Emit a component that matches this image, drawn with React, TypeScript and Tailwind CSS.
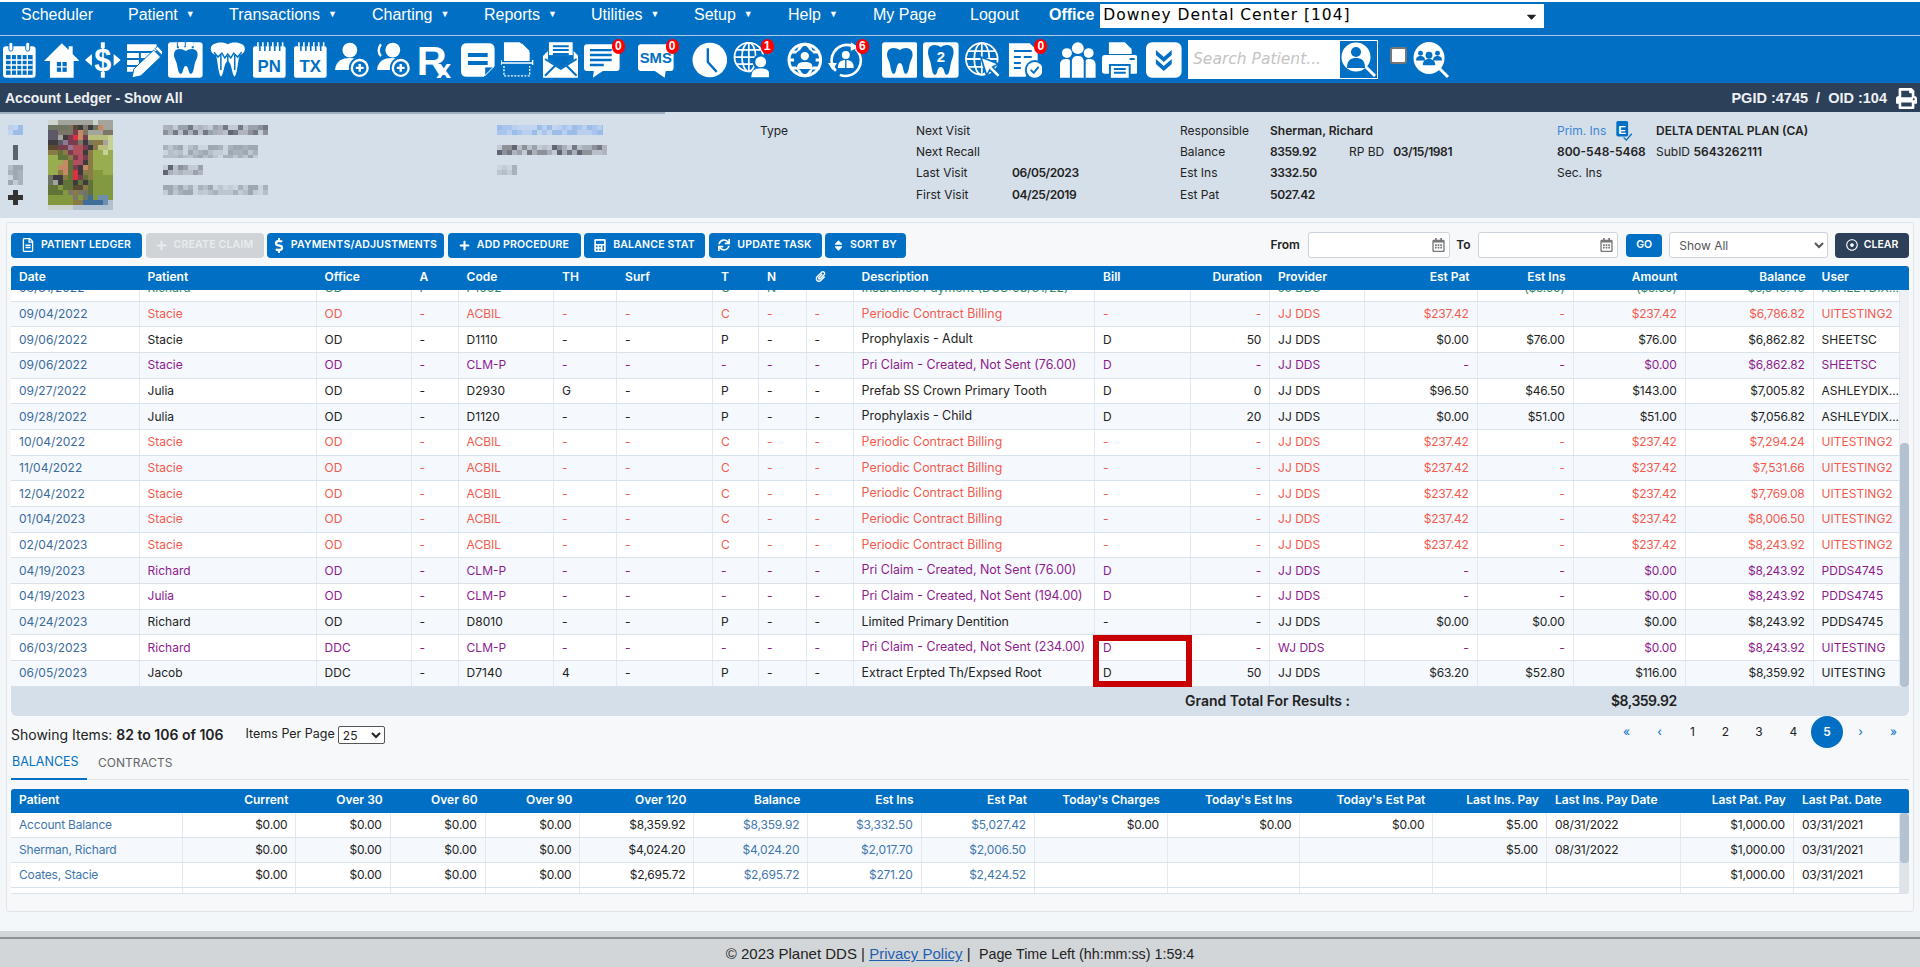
import type { ReactNode } from 'react';
import { FaCalculator, FaCaretDown, FaDollarSign, FaPaperclip, FaPlus, FaPrint, FaRegCalendarAlt, FaRegDotCircle, FaRegFileAlt, FaSort, FaSync } from 'react-icons/fa';

const B = '#0170c4';
const TOOTH = 'M18 9C14 6 8 6 6.5 10 5 15 8 18 9 22 10 27 10.5 32 13 32 15.5 32 15 24 18 24 21 24 20.5 32 23 32 25.5 32 26 27 27 22 28 18 31 15 29.5 10 28 6 22 6 18 9Z';

function Svg({ children }: { children: ReactNode }) {
  return <svg viewBox="0 0 36 36" className="h-[36px] w-full" fill="#fff">{children}</svg>;
}

function Person({ x, y, s = 1, fill = '#fff' }: { x: number; y: number; s?: number; fill?: string }) {
  return (
    <g transform={`translate(${x} ${y}) scale(${s})`} fill={fill}>
      <circle cx="0" cy="-6" r="5.5" />
      <path d="M-10 10C-10 2-5 0 0 0 5 0 10 2 10 10Z" />
    </g>
  );
}

function PlusDisc({ x, y }: { x: number; y: number }) {
  return (
    <g>
      <circle cx={x} cy={y} r="11" fill={B} />
      <circle cx={x} cy={y} r="8" fill="none" stroke="#fff" strokeWidth="2.4" />
      <path d={`M${x - 4} ${y}h8M${x} ${y - 4}v8`} stroke="#fff" strokeWidth="2.4" />
    </g>
  );
}

function Globe({ x = 18, y = 18, r = 16 }: { x?: number; y?: number; r?: number }) {
  return (
    <g fill="none" stroke="#fff" strokeWidth="1.8">
      <circle cx={x} cy={y} r={r} />
      <ellipse cx={x} cy={y} rx={r * 0.48} ry={r} />
      <path d={`M${x} ${y - r}v${r * 2}M${x - r} ${y}h${r * 2}M${x - r * 0.87} ${y - r * 0.5}h${r * 1.74}M${x - r * 0.87} ${y + r * 0.5}h${r * 1.74}`} />
    </g>
  );
}

function Label({ x, y, size, children, fill = B }: { x: number; y: number; size: number; children: ReactNode; fill?: string }) {
  return <text x={x} y={y} fontSize={size} fontWeight="700" fontFamily="'Liberation Sans', sans-serif" textAnchor="middle" fill={fill}>{children}</text>;
}

function PadIcon({ text }: { text: string }) {
  return (
    <Svg>
      <rect x="1" y="4" width="33" height="32" rx="2" />
      <path d="M8 1v8M13 1v8M18 1v8M23 1v8M28 1v8" stroke={B} strokeWidth="1.6" />
      <path d="M6 0v4M11 0v4M16 0v4M21 0v4M26 0v4M31 0v4" stroke="#fff" strokeWidth="1.6" />
      <Label x={17.5} y={30} size={17}>{text}</Label>
    </Svg>
  );
}

const Icons = {
  calendar: (
    <Svg>
      <rect x="1" y="4" width="33" height="32" rx="3" />
      <rect x="4" y="13" width="27" height="20" fill={B} />
      <path d="M9.4 13v20M14.8 13v20M20.2 13v20M25.6 13v20M4 18h27M4 23h27M4 28h27" stroke="#fff" strokeWidth="1.4" />
      <rect x="7" y="0" width="4" height="9" rx="2" stroke={B} />
      <rect x="24" y="0" width="4" height="9" rx="2" stroke={B} />
    </Svg>
  ),
  home: (
    <Svg>
      <path d="M18 1 25 8V4H29V12L36 19H30V36H6V19H0Z" />
      <path d="M13 20H23V30H13Z" fill={B} />
      <path d="M18 20V30M13 25H23" stroke="#fff" strokeWidth="1.4" />
    </Svg>
  ),
  dollar: (
    <Svg>
      <Label x={18} y={29} size={31} fill="#fff">$</Label>
      <path d="M0 18 7 12V24ZM36 18 29 12V24Z" />
      <path d="M16 0h4v6h-4ZM16 30h4v6h-4Z" />
    </Svg>
  ),
  editList: (
    <Svg>
      <path d="M0 2H30V9H0ZM0 11H12V16H0ZM14 11H25V16H14ZM0 18H12V23H0ZM0 25H10V30H0ZM27 11H30V13L27 16Z" />
      <path d="M5 36 7 27 27 8 34 15 14 34ZM28.5 6.5 31 4 37 10.5 35 13Z" stroke={B} strokeWidth="1" />
    </Svg>
  ),
  toothBox: (
    <Svg>
      <rect x="0" y="0" width="35" height="36" rx="3" />
      <path d={TOOTH} fill={B} />
      <path d="M10 0v6M25 0v6M17 0v5" stroke={B} strokeWidth="2" />
      <path d="M10 0H17V4H10ZM19 0H26V4H19Z" fill="#fff" />
    </Svg>
  ),
  toothRoots: (
    <Svg>
      <path d="M18 2C13-1 3 0 1 5 0 10 3 12 6 13 8 20 8 30 11 35 14 33 14 20 18 19 22 20 22 33 25 35 28 30 28 20 30 13 33 12 36 10 35 5 33 0 23-1 18 2Z" />
      <path d="M4 10 8 15 12 11 15 16 18 12 21 16 24 11 28 15 32 10M11 13V28M25 13V28M18 14V20" fill="none" stroke={B} strokeWidth="1.5" />
    </Svg>
  ),
  pn: <PadIcon text="PN" />,
  tx: <PadIcon text="TX" />,
  addUser: (
    <Svg>
      <circle cx="15" cy="8" r="7.5" />
      <path d="M0 28C1 19 7 16 15 16 23 16 28 19 30 28Z" />
      <PlusDisc x={25} y={26} />
    </Svg>
  ),
  addUserAlt: (
    <Svg>
      <circle cx="17" cy="8" r="7.5" />
      <path d="M5 2C2 6 2 11 5 14" fill="none" stroke="#fff" strokeWidth="2.4" />
      <path d="M1 28C2 19 8 16 16 16 24 16 28 19 30 28Z" />
      <PlusDisc x={25} y={26} />
    </Svg>
  ),
  rx: (
    <Svg>
      <Label x={14} y={33} size={42} fill="#fff">R</Label>
      <Label x={26} y={36} size={27} fill="#fff">x</Label>
    </Svg>
  ),
  note: (
    <Svg>
      <path d="M7 1H29Q35 1 35 7V24L24 35H7Q1 35 1 29V7Q1 1 7 1Z" />
      <path d="M8 11H28V15H8ZM8 19H28V23H8Z" fill={B} />
      <path d="M34 25 25 34V25Z" fill={B} stroke="#fff" strokeWidth="1" />
    </Svg>
  ),
  scan: (
    <Svg>
      <path d="M3 0H19L29 10V19H3ZM21 1 29 9H21Z" />
      <path d="M0 21H32M0 18v5M32 18v5" stroke="#fff" strokeWidth="1.4" />
      <path d="M3 24V34H29V24" fill="none" stroke="#fff" strokeWidth="1.4" strokeDasharray="2 1.4" />
    </Svg>
  ),
  mail: (
    <Svg>
      <path d="M6 0H30V13H6Z" />
      <path d="M10 4H26M10 8H26M10 12H26" stroke={B} strokeWidth="2" />
      <path d="M0 14 5 9V18L18 26 31 18V9L36 14V36H0Z" />
      <path d="M2 17 18 27 34 17M2 34 13 23M34 34 23 23" fill="none" stroke={B} strokeWidth="2" />
    </Svg>
  ),
  chat: (
    <Svg>
      <path d="M3 2H33Q36 2 36 5V26Q36 29 33 29H19L9 36 10 29H3Q0 29 0 26V5Q0 2 3 2Z" />
      <path d="M6 8H28M6 13H28M6 18H28M6 23H20" stroke={B} strokeWidth="2.4" />
    </Svg>
  ),
  sms: (
    <Svg>
      <path d="M3 2H33Q36 2 36 5V26Q36 29 33 29H28L27 36 17 29H3Q0 29 0 26V5Q0 2 3 2Z" />
      <Label x={18} y={21} size={15}>SMS</Label>
    </Svg>
  ),
  clock: (
    <Svg>
      <circle cx="18" cy="18" r="17.5" />
      <path d="M16 6V20L25 30" fill="none" stroke={B} strokeWidth="2.4" />
    </Svg>
  ),
  globeUser: (
    <Svg>
      <Globe x={16} y={15} r={14.5} />
      <circle cx="28" cy="20" r="8" fill={B} />
      <circle cx="28" cy="20" r="5.5" />
      <path d="M18 36C18 28 22 26 28 26 34 26 38 28 38 36Z" stroke={B} />
    </Svg>
  ),
  globe: (
    <Svg>
      <g stroke="#fff" fill="none" strokeWidth="3"><circle cx="18" cy="18" r="16" /><ellipse cx="18" cy="18" rx="8" ry="16" /><path d="M3 10H33M3 26H33M2 18H8M28 18H34" /></g>
      <circle cx="18" cy="18" r="11" fill={B} />
      <circle cx="18" cy="14" r="4.2" />
      <path d="M10 27C10 21 13 20 18 20 23 20 26 21 26 27Z" />
    </Svg>
  ),
  sync: (
    <Svg>
      <path d="M8 29A15.5 15.5 0 0 1 24 3.5M28 7A15.5 15.5 0 0 1 12 33" fill="none" stroke="#fff" strokeWidth="2.6" />
      <path d="M0 21H9L4.5 28ZM23 0 31 5 23 9Z" />
      <circle cx="18" cy="13" r="4" />
      <path d="M10 26C10 20 13 18 18 18 23 18 26 20 26 26Z" />
      <path d="M18 18v8" stroke={B} strokeWidth="1.4" />
    </Svg>
  ),
  toothPlain: (
    <Svg>
      <rect x="0" y="0" width="36" height="36" rx="3" />
      <path d="M18 8C14 5 7 5 5.5 10 4 15 7 18 8 22 9 27 9.5 32 12 32 15 32 14 21 18 21 22 21 21 32 24 32 26.5 32 27 27 28 22 29 18 32 15 30.5 10 29 5 22 5 18 8Z" fill={B} />
    </Svg>
  ),
  toothTwo: (
    <Svg>
      <rect x="0" y="0" width="36" height="36" rx="3" />
      <path d="M18 5C14 2 7 2 5.5 7 4 13 7 17 8 22 9 27 9.5 33 12 33 15 33 14 25 18 25 22 25 21 33 24 33 26.5 33 27 27 28 22 29 17 32 13 30.5 7 29 2 22 2 18 5Z" fill={B} />
      <Label x={18} y={20} size={15} fill="#fff">2</Label>
    </Svg>
  ),
  globeCursor: (
    <Svg>
      <Globe x={17} y={17} r={16} />
      <path d="M16 15 34 22 28 25 36 33 33 36 25 28 22 34Z" stroke={B} strokeWidth="1.6" />
    </Svg>
  ),
  docCheck: (
    <Svg>
      <path d="M2 1H23L31 9V21H24L19 35H2Z" />
      <path d="M7 9H25M7 15H14M17 15H25M7 21H14M7 26H14" stroke={B} strokeWidth="2" />
      <circle cx="28" cy="28" r="10" fill={B} />
      <circle cx="28" cy="28" r="8" />
      <path d="M24 28 27 31 32 25" fill="none" stroke={B} strokeWidth="2" />
    </Svg>
  ),
  people: (
    <Svg>
      <circle cx="7" cy="11" r="5" />
      <circle cx="29" cy="11" r="5" />
      <circle cx="18" cy="6" r="6" />
      <path d="M0 36V23C0 18 3 17 7 17 9 17 10 18 10 19V36ZM26 36V19C26 18 27 17 29 17 33 17 36 18 36 23V36ZM12 36V20C12 15 15 14 18 14 21 14 24 15 24 20V36Z" />
    </Svg>
  ),
  printer: (
    <Svg>
      <path d="M7 0H23L30 7V12H7ZM24 1 29 6H24Z" />
      <path d="M3 13H33Q36 13 36 16V30Q36 32 33 32H29V22H7V32H3Q0 32 0 30V16Q0 13 3 13Z" />
      <path d="M9 24H27V36H9Z" />
      <path d="M12 27H24M12 31H24" stroke={B} strokeWidth="2" />
      <path d="M28 17H33" stroke={B} strokeWidth="2" />
    </Svg>
  ),
  chevrons: (
    <Svg>
      <rect x="0" y="0" width="36" height="36" rx="6" />
      <path d="M10 8 18 15 26 8V13L18 20 10 13ZM10 17 18 24 26 17V22L18 29 10 22Z" fill={B} />
    </Svg>
  ),
};

const toolbar: { icon: keyof typeof Icons; badge?: string; gap?: string }[] = [
  { icon: 'calendar' }, { icon: 'home' }, { icon: 'dollar' }, { icon: 'editList' }, { icon: 'toothBox' }, { icon: 'toothRoots' },
  { icon: 'pn' }, { icon: 'tx' }, { icon: 'addUser' }, { icon: 'addUserAlt' }, { icon: 'rx' }, { icon: 'note' }, { icon: 'scan' }, { icon: 'mail' },
  { icon: 'chat', badge: '0' }, { icon: 'sms', badge: '0', gap: 'ml-[12px]' }, { icon: 'clock', gap: 'ml-[12px]' }, { icon: 'globeUser', badge: '1' },
  { icon: 'globe', gap: 'ml-[12px]' }, { icon: 'sync', badge: '6' }, { icon: 'toothPlain', gap: 'ml-[12px]' }, { icon: 'toothTwo' }, { icon: 'globeCursor' },
  { icon: 'docCheck', badge: '0' }, { icon: 'people', gap: 'ml-[12px]' }, { icon: 'printer' }, { icon: 'chevrons', gap: 'ml-[3px]' },
];

const navItems = [
  { label: 'Scheduler', w: 'w-[107px]' }, { label: 'Patient', w: 'w-[101px]', caret: true }, { label: 'Transactions', w: 'w-[143px]', caret: true },
  { label: 'Charting', w: 'w-[112px]', caret: true }, { label: 'Reports', w: 'w-[107px]', caret: true }, { label: 'Utilities', w: 'w-[103px]', caret: true },
  { label: 'Setup', w: 'w-[94px]', caret: true }, { label: 'Help', w: 'w-[85px]', caret: true }, { label: 'My Page', w: 'w-[97px]' }, { label: 'Logout', w: 'w-[79px]' },
];

function hash(n: number) {
  const v = Math.sin(n * 127.1) * 43758.5453;
  return v - Math.floor(v);
}

// blurred-out patient details
function Pixels({ w, h, seed, colors }: { w: number; h: number; seed: number; colors: string[] }) {
  const cols = Math.ceil(w / 5);
  const rows = Math.ceil(h / 5);
  const cells = [];
  for (let y = 0; y < rows; y++) {
    for (let x = 0; x < cols; x++) {
      const i = x + y * cols + seed;
      cells.push(<rect key={i} x={x * 5} y={y * 5} width="5" height="5" fill={colors[Math.floor(hash(i) * colors.length)]} />);
    }
  }
  return <svg width={w} height={h} className="block">{cells}</svg>;
}

const GREY = ['#8e9298', '#a9b0b9', '#b9c0c9', '#737a85', '#c3cbd5', '#99a2ad', '#b0b5bd', '#5f6774'];
const PALE = ['#b6bec8', '#c3ccd6', '#a8b2bd', '#ccd4dd', '#9fa8b2', '#bcc6d1'];
const BLUE = ['#a9c5ee', '#b8cfef', '#9dbde9', '#c2d5ef'];

const PHOTO_KEY: Record<string, string> = {
  l: '#cdd3cf', n: '#a3a49c', w: '#6e7563', k: '#3d3a40', s: '#5c5a68', b: '#7d7566', r: '#b0505c', R: '#de2f3e', m: '#7a3c50', t: '#c58a64',
  y: '#b8c07c', Y: '#c8d098', g: '#82993f', G: '#98ac50', d: '#62733a', o: '#8a7a45', u: '#3f6d99', U: '#6f8fae', x: '#5a4a30', p: '#8f7a92', c: '#b3c0cf',
};
const PHOTO = [
  'llnnnnnnnlnnn', 'wwwwbxkbkwtnn', 'ssbbbmtbnnnbb', 'ssnkmRtmyyyyY', 'kkspmmbkboonY', 'xxmmprrmkoyyY', 'oodomrrkoGGYG',
  'GGddomrmoGGGG', 'GGGtdrrkoGGGG', 'GGttdmktoGGGG', 'GGotdRkooggGG', 'wkkodRmdogggg', 'wnkddkdkdgggg', 'ddgddxxodgggg',
  'dddgbobwdgggg', 'gggggbgwugUUg', 'gggggoouuuuUc', 'lllllcccccccc',
];

function Photo() {
  return (
    <svg width="65" height="90" className="block">
      {PHOTO.flatMap((row, y) => row.split('').map((c, x) => <rect key={`${x}-${y}`} x={x * 5} y={y * 5} width="5" height="5" fill={PHOTO_KEY[c]} />))}
    </svg>
  );
}

function InfoRow({ children }: { children: ReactNode }) {
  return <div className="flex h-[21.3px] items-center whitespace-nowrap">{children}</div>;
}

function ActionButton({ icon, children, w, disabled }: { icon: ReactNode; children: ReactNode; w: string; disabled?: boolean }) {
  return (
    <button className={`flex h-[25px] ${w} items-center justify-center gap-[7px] rounded-[4px] text-[10.5px] font-semibold tracking-[0.2px] ${disabled ? 'bg-[#d0d4d9] text-[#e9ebee]' : 'bg-[#0170c4] text-white'}`}>
      {icon}{children}
    </button>
  );
}

const COLS = 'grid-cols-[128.6px_177px_95px_47px_95.5px_63px_96px_46px_47.5px_47px_241.5px_96px_79px_95px_112.5px_96px_112px_128px_86.4px]';
const HEADERS: { t: ReactNode; r?: boolean }[] = [
  { t: 'Date' }, { t: 'Patient' }, { t: 'Office' }, { t: 'A' }, { t: 'Code' }, { t: 'TH' }, { t: 'Surf' }, { t: 'T' }, { t: 'N' }, { t: <FaPaperclip className="h-[11px] w-[11px]" /> },
  { t: 'Description' }, { t: 'Bill' }, { t: 'Duration', r: true }, { t: 'Provider' }, { t: 'Est Pat', r: true }, { t: 'Est Ins', r: true }, { t: 'Amount', r: true }, { t: 'Balance', r: true }, { t: 'User' },
];
const RIGHT_COLS = [12, 14, 15, 16, 17];

const TONES: Record<string, string> = { k: 'text-[#222]', r: 'text-[#f4594d]', p: 'text-[#8e1a8e]', g: 'text-[#2f8a62]' };
const contract = (date: string, balance: string) => ['r', date, 'Stacie', 'OD', '-', 'ACBIL', '-', '-', 'C', '-', '-', 'Periodic Contract Billing', '-', '-', 'JJ DDS', '$237.42', '-', '$237.42', balance, 'UITESTING2'];
const claim = (date: string, who: string, office: string, amt: string, prov: string, balance: string, user: string) => ['p', date, who, office, '-', 'CLM-P', '-', '-', '-', '-', '-', `Pri Claim - Created, Not Sent (${amt})`, 'D', '-', prov, '-', '-', '$0.00', balance, user];
const ROWS = [
  contract('09/04/2022', '$6,786.82'),
  ['k', '09/06/2022', 'Stacie', 'OD', '-', 'D1110', '-', '-', 'P', '-', '-', 'Prophylaxis - Adult', 'D', '50', 'JJ DDS', '$0.00', '$76.00', '$76.00', '$6,862.82', 'SHEETSC'],
  claim('09/06/2022', 'Stacie', 'OD', '76.00', 'JJ DDS', '$6,862.82', 'SHEETSC'),
  ['k', '09/27/2022', 'Julia', 'OD', '-', 'D2930', 'G', '-', 'P', '-', '-', 'Prefab SS Crown Primary Tooth', 'D', '0', 'JJ DDS', '$96.50', '$46.50', '$143.00', '$7,005.82', 'ASHLEYDIX...'],
  ['k', '09/28/2022', 'Julia', 'OD', '-', 'D1120', '-', '-', 'P', '-', '-', 'Prophylaxis - Child', 'D', '20', 'JJ DDS', '$0.00', '$51.00', '$51.00', '$7,056.82', 'ASHLEYDIX...'],
  contract('10/04/2022', '$7,294.24'),
  contract('11/04/2022', '$7,531.66'),
  contract('12/04/2022', '$7,769.08'),
  contract('01/04/2023', '$8,006.50'),
  contract('02/04/2023', '$8,243.92'),
  claim('04/19/2023', 'Richard', 'OD', '76.00', 'JJ DDS', '$8,243.92', 'PDDS4745'),
  claim('04/19/2023', 'Julia', 'OD', '194.00', 'JJ DDS', '$8,243.92', 'PDDS4745'),
  ['k', '04/24/2023', 'Richard', 'OD', '-', 'D8010', '-', '-', 'P', '-', '-', 'Limited Primary Dentition', '-', '-', 'JJ DDS', '$0.00', '$0.00', '$0.00', '$8,243.92', 'PDDS4745'],
  claim('06/03/2023', 'Richard', 'DDC', '234.00', 'WJ DDS', '$8,243.92', 'UITESTING'),
  ['k', '06/05/2023', 'Jacob', 'DDC', '-', 'D7140', '4', '-', 'P', '-', '-', 'Extract Erpted Th/Expsed Root', 'D', '50', 'JJ DDS', '$63.20', '$52.80', '$116.00', '$8,359.92', 'UITESTING'],
];
const CUT_ROW = ['g', '08/31/2022', 'Richard', 'OD', 'P', 'P1002', '-', '-', 'C', 'N', '-', 'Insurance Payment (DOS:08/31/22)', '-', '-', 'JJ DDS', '-', '($5.00)', '($5.00)', '$6,549.40', 'ASHLEYDIX...'];

function LedgerRow({ row, light }: { row: string[]; light: boolean }) {
  const [tone, ...cells] = row;
  return (
    <div className={`grid h-[25.67px] ${COLS} border-b border-[#d9e1ea] ${light ? 'bg-[#f5f9fd]' : 'bg-white'} ${TONES[tone]}`}>
      {cells.map((c, i) => (
        <div key={i} className={`flex items-center overflow-hidden whitespace-nowrap border-r border-[#e3e9f0] px-[8px] ${RIGHT_COLS.includes(i) ? 'justify-end tracking-[-0.2px]' : ''} ${i === 0 ? 'text-[#3a6a9c]' : ''} ${i === 10 ? 'text-[12.4px]' : ''}`}>{c}</div>
      ))}
    </div>
  );
}

const BAL_COLS = 'grid-cols-[171.5px_113.9px_94.3px_94.9px_94.9px_113.9px_113.9px_113.3px_113.4px_133px_132.5px_132.9px_113.6px_133.7px_113.3px_106px]';
const BAL_HEAD = ['Patient', 'Current', 'Over 30', 'Over 60', 'Over 90', 'Over 120', 'Balance', 'Est Ins', 'Est Pat', "Today's Charges", "Today's Est Ins", "Today's Est Pat", 'Last Ins. Pay', 'Last Ins. Pay Date', 'Last Pat. Pay', 'Last Pat. Date'];
const BAL_ROWS = [
  ['Account Balance', '$0.00', '$0.00', '$0.00', '$0.00', '$8,359.92', '$8,359.92', '$3,332.50', '$5,027.42', '$0.00', '$0.00', '$0.00', '$5.00', '08/31/2022', '$1,000.00', '03/31/2021'],
  ['Sherman, Richard', '$0.00', '$0.00', '$0.00', '$0.00', '$4,024.20', '$4,024.20', '$2,017.70', '$2,006.50', '', '', '', '$5.00', '08/31/2022', '$1,000.00', '03/31/2021'],
  ['Coates, Stacie', '$0.00', '$0.00', '$0.00', '$0.00', '$2,695.72', '$2,695.72', '$271.20', '$2,424.52', '', '', '', '', '', '$1,000.00', '03/31/2021'],
];
const balLeft = (i: number) => i === 0 || i === 13 || i === 15;
const balLink = (i: number) => i === 0 || i === 6 || i === 7 || i === 8;

export default function App() {
  return (
    <div className="flex h-[967px] w-[1920px] flex-col overflow-hidden bg-[#f4f7f9] font-['Inter',sans-serif] text-[12px] text-[#222]">
      <div className="h-[2px] bg-white" />
      <nav className="flex h-[33px] items-start bg-[#0170c4] pl-[21px] pt-[1px] font-['Liberation_Sans',sans-serif] text-[16px] text-white">
        {navItems.map((n) => (
          <div key={n.label} className={`flex ${n.w} items-center gap-[8px]`}>
            {n.label}
            {n.caret && <span className="text-[9px]">▼</span>}
          </div>
        ))}
        <span className="font-bold">Office</span>
        <div className="ml-[6px] mt-[1px] flex h-[24px] w-[444px] items-center justify-between bg-white pl-[3px] pr-[5px] font-['DejaVu_Sans',sans-serif] text-[15.5px] tracking-[0.95px] text-black">
          Downey Dental Center [104]
          <FaCaretDown className="h-[15px] w-[15px] text-[#222]" />
        </div>
      </nav>
      <div className="h-[1px] bg-[#a8cbe8]" />
      <div className="flex h-[47px] items-center gap-[6px] bg-[#0170c4] pl-[2px]">
        {toolbar.map((t) => (
          <div key={t.icon} className={`relative h-[36px] w-[35.6px] shrink-0 ${t.gap ?? ''}`}>
            {Icons[t.icon]}
            {t.badge && (
              <span className="absolute right-[-5px] top-[-3px] flex h-[15px] w-[13px] items-center justify-center rounded-full bg-[#f00] font-['Liberation_Sans',sans-serif] text-[12px] font-bold text-white">{t.badge}</span>
            )}
          </div>
        ))}
        <div className="flex h-[39px] w-[190px] shrink-0 items-center justify-between bg-white pl-[5px] pr-[1px]">
          <span className="font-['DejaVu_Sans',sans-serif] text-[15.5px] italic text-[#c4c4c4]">Search Patient...</span>
          <div className="h-[37px] w-[37px] bg-[#0170c4]">
            <svg viewBox="0 0 37 37" className="h-[37px] w-[37px]">
              <circle cx="16" cy="16" r="14.5" fill="#fff" />
              <path d="M26 26 35 35" stroke="#fff" strokeWidth="3" />
              <g transform="translate(16 19)"><circle cx="0" cy="-8" r="5" fill={B} /><path d="M-9 8C-9 0-5-2 0-2 5-2 9 0 9 8Z" fill={B} /></g>
            </svg>
          </div>
        </div>
        <div className="ml-[6px] h-[17px] w-[17px] -translate-y-[4px] rounded-[3px] border-2 border-[#777] bg-white" />
        <svg viewBox="0 0 37 37" className="h-[37px] w-[37px]">
          <ellipse cx="16" cy="17" rx="15.5" ry="16" fill="#fff" />
          <path d="M26 27 35 36" stroke="#fff" strokeWidth="3" />
          <Person x={7.5} y={15} s={0.45} fill={B} />
          <Person x={24.5} y={15} s={0.45} fill={B} />
          <Person x={16} y={18} s={0.62} fill={B} />
        </svg>
      </div>
      <header className="flex h-[29px] items-center justify-between bg-[#2d4059] pl-[5px] pr-[3px] pt-[2px] font-['Liberation_Sans',sans-serif] text-[14px] font-bold text-[#eef1f4]">
        <span>Account Ledger - Show All</span>
        <span className="flex items-center gap-[9px] text-[14.5px]">
          PGID :4745&nbsp;&nbsp;/&nbsp;&nbsp;OID :104
          <FaPrint className="h-[21px] w-[21px] text-white" />
        </span>
      </header>

      <section className="h-[106px] bg-[#d5dfe9]">
        <div className="h-[2px] w-[665px] bg-[#9fb0c2]" />
        <div className="flex">
          <div className="ml-[8px] flex w-[15px] flex-col pt-[11px]">
            <Pixels w={15} h={10} seed={1} colors={BLUE} />
            <div className="mt-[10px] h-[15px] w-[5px] self-center bg-[#5b616d]" />
            <div className="mt-[5px]"><Pixels w={15} h={20} seed={40} colors={PALE} /></div>
            <svg width="15" height="15" className="mt-[5px]"><path d="M5 0h5v5h5v5h-5v5H5v-5H0V5h5Z" fill="#333" /></svg>
          </div>
          <div className="ml-[25px] mt-[6px]"><Photo /></div>
          <div className="ml-[50px] flex w-[334px] flex-col pt-[11px]">
            <Pixels w={105} h={10} seed={100} colors={GREY} />
            <div className="mt-[10px]"><Pixels w={95} h={13} seed={200} colors={PALE} /></div>
            <div className="mt-[7px]"><Pixels w={40} h={10} seed={300} colors={GREY} /></div>
            <div className="mt-[10px]"><Pixels w={105} h={10} seed={400} colors={PALE} /></div>
          </div>
          <div className="flex w-[263px] flex-col pt-[11px]">
            <Pixels w={106} h={10} seed={500} colors={BLUE} />
            <div className="mt-[10px]"><Pixels w={110} h={10} seed={600} colors={GREY} /></div>
            <div className="mt-[10px]"><Pixels w={20} h={10} seed={700} colors={PALE} /></div>
          </div>
          <div className="w-[156px] pt-[6px]"><InfoRow>Type</InfoRow></div>
          <div className="w-[96px] pt-[6px]">
            <InfoRow>Next Visit</InfoRow><InfoRow>Next Recall</InfoRow><InfoRow>Last Visit</InfoRow><InfoRow>First Visit</InfoRow>
          </div>
          <div className="w-[168px] pt-[6px] font-semibold tracking-[-0.4px]">
            <InfoRow>&nbsp;</InfoRow><InfoRow>&nbsp;</InfoRow><InfoRow>06/05/2023</InfoRow><InfoRow>04/25/2019</InfoRow>
          </div>
          <div className="w-[90px] pt-[6px]">
            <InfoRow>Responsible</InfoRow><InfoRow>Balance</InfoRow><InfoRow>Est Ins</InfoRow><InfoRow>Est Pat</InfoRow>
          </div>
          <div className="w-[287px] pt-[6px] font-semibold">
            <InfoRow>Sherman, Richard</InfoRow>
            <InfoRow><span className="w-[79px] tracking-[-0.4px]">8359.92</span><span className="mr-[9px] font-normal">RP BD</span><span className="tracking-[-0.4px]">03/15/1981</span></InfoRow>
            <InfoRow><span className="tracking-[-0.4px]">3332.50</span></InfoRow>
            <InfoRow><span className="tracking-[-0.4px]">5027.42</span></InfoRow>
          </div>
          <div className="w-[99px] pt-[6px]">
            <InfoRow>
              <span className="text-[#3d86d6]">Prim. Ins</span>
              <svg viewBox="0 0 20 22" className="ml-[9px] h-[20px] w-[19px]">
                <rect x="1" y="0" width="13" height="17" rx="2" fill={B} />
                <Label x={7.5} y={14} size={13} fill="#fff">E</Label>
                <path d="M9 18 12 21 18 14" fill="none" stroke={B} strokeWidth="1.4" />
              </svg>
            </InfoRow>
            <InfoRow><span className="font-semibold">800-548-5468</span></InfoRow>
            <InfoRow>Sec. Ins</InfoRow>
          </div>
          <div className="pt-[6px]">
            <InfoRow><span className="font-semibold">DELTA DENTAL PLAN (CA)</span></InfoRow>
            <InfoRow>SubID&nbsp;<span className="font-semibold">5643262111</span></InfoRow>
          </div>
        </div>
      </section>

      <main className="mx-[6px] mt-[4px] h-[690px] rounded-[4px] border border-[#dfe4ea] bg-[#f7f8fa] px-[4px] pt-[9px]">
        <div className="flex items-center">
          <div className="flex gap-[3.5px]">
            <ActionButton w="w-[131px]" icon={<FaRegFileAlt className="h-[14px] w-[12px]" />}>PATIENT LEDGER</ActionButton>
            <ActionButton w="w-[118px]" disabled icon={<FaPlus className="h-[11px] w-[11px]" />}>CREATE CLAIM</ActionButton>
            <ActionButton w="w-[177px]" icon={<FaDollarSign className="h-[15px] w-[10px]" />}>PAYMENTS/ADJUSTMENTS</ActionButton>
            <ActionButton w="w-[133px]" icon={<FaPlus className="h-[11px] w-[11px]" />}>ADD PROCEDURE</ActionButton>
            <ActionButton w="w-[121px]" icon={<FaCalculator className="h-[13px] w-[12px]" />}>BALANCE STAT</ActionButton>
            <ActionButton w="w-[113px]" icon={<FaSync className="h-[12px] w-[12px]" />}>UPDATE TASK</ActionButton>
            <ActionButton w="w-[81px]" icon={<FaSort className="h-[13px] w-[9px]" />}>SORT BY</ActionButton>
          </div>
          <span className="ml-[364.5px] w-[38px] font-semibold">From</span>
          <div className="flex h-[26px] w-[142px] items-center justify-end rounded-[3px] border border-[#ccd3db] bg-white pr-[4px]"><FaRegCalendarAlt className="h-[14px] w-[13px] text-[#777]" /></div>
          <span className="ml-[6px] w-[22px] font-semibold">To</span>
          <div className="flex h-[26px] w-[140px] items-center justify-end rounded-[3px] border border-[#ccd3db] bg-white pr-[4px]"><FaRegCalendarAlt className="h-[14px] w-[13px] text-[#777]" /></div>
          <button className="ml-[8px] h-[23px] w-[36px] rounded-[4px] bg-[#0170c4] text-[10.5px] font-semibold text-white">GO</button>
          <select className="ml-[7px] h-[26px] w-[159px] rounded-[3px] border border-[#ccd3db] bg-white pl-[5px] text-[12px] text-[#555]"><option>Show All</option></select>
          <button className="ml-[7px] flex h-[25px] w-[74px] items-center justify-center gap-[6px] rounded-[4px] bg-[#2d4059] text-[10.5px] font-semibold text-white"><FaRegDotCircle className="h-[12px] w-[12px]" />CLEAR</button>
        </div>

        <div className="relative mt-[8px] w-[1898px]">
          <div className={`grid h-[24px] ${COLS} w-[1898px] rounded-t-[3px] bg-[#0170c4] pb-[3px] font-semibold text-white`}>
            {HEADERS.map((h, i) => (
              <div key={i} className={`flex items-center whitespace-nowrap px-[8px] ${h.r ? 'justify-end' : ''}`}>{h.t}</div>
            ))}
          </div>
          <div className="flex h-[397px] overflow-hidden">
            <div className="w-[1889px] shrink-0">
              <div className="-mt-[14px]">
                <LedgerRow row={CUT_ROW} light={false} />
                {ROWS.map((r, i) => <LedgerRow key={i} row={r} light={i % 2 === 0} />)}
              </div>
            </div>
            <div className="flex w-[9px] flex-col bg-[#eef0f3] pt-[153px]"><div className="h-[244px] w-[9px] rounded-[4px] bg-[#b4c1d0]" /></div>
          </div>
          <div className="absolute left-[1082px] top-[369px] h-[52px] w-[98.5px] border-[6px] border-[#c80000]" />
          <div className="flex h-[29px] items-center rounded-b-[6px] bg-[#d5dfe9] pb-[3px] pl-[1174px] text-[14px] font-semibold">
            <span className="w-[426px]">Grand Total For Results :</span>
            <span className="tracking-[-0.5px]">$8,359.92</span>
          </div>
        </div>

        <div className="flex h-[32px] w-[1898px] items-center">
          <span className="mt-[5px] text-[14px]">Showing Items: <b className="font-semibold">82 to 106 of 106</b></span>
          <span className="ml-[22px] mt-[5px] text-[12.5px]">Items Per Page</span>
          <select className="ml-[3px] mt-[6px] h-[18px] w-[47px] rounded-[2px] border border-[#555] bg-white text-[12px]"><option>25</option></select>
          <div className="ml-auto flex items-center text-[#222]">
            <span className="w-[33px] text-center text-[#0170c4]">«</span>
            <span className="w-[33px] text-center text-[#0170c4]">‹</span>
            <span className="w-[33px] text-center">1</span>
            <span className="w-[33px] text-center">2</span>
            <span className="w-[34px] text-center">3</span>
            <span className="w-[35px] text-center">4</span>
            <span className="flex h-[32px] w-[32px] items-center justify-center rounded-full bg-[#0170c4] font-semibold text-white">5</span>
            <span className="w-[35px] text-center text-[#0170c4]">›</span>
            <span className="w-[31px] text-center text-[#0170c4]">»</span>
          </div>
        </div>

        <div className="mt-[2px] flex h-[30px] w-[1898px] border-b border-[#dfe3e8]">
          <div className="-mb-px flex w-[76px] items-center justify-start border-b-2 border-[#0170c4] pb-[4px] pl-[1px] text-[12.5px] text-[#0170c4]">BALANCES</div>
          <div className="ml-[11px] flex items-center pb-[4px] text-[#666]">CONTRACTS</div>
        </div>

        <div className="mt-[9px] w-[1898px]">
          <div className={`grid h-[24px] ${BAL_COLS} rounded-t-[3px] bg-[#0170c4] pb-[2px] font-semibold text-white`}>
            {BAL_HEAD.map((h, i) => (
              <div key={h} className={`flex items-center whitespace-nowrap px-[8px] ${balLeft(i) ? '' : 'justify-end'}`}>{h}</div>
            ))}
          </div>
          <div className="flex h-[81px] overflow-hidden rounded-b-[3px] border-b border-[#d9e1ea]">
            <div className="w-[1889px] shrink-0">
              {BAL_ROWS.map((r, y) => (
                <div key={r[0]} className={`grid h-[25px] ${BAL_COLS} border-b border-[#d9e1ea] ${y === 1 ? 'bg-[#f5f9fd]' : 'bg-white'}`}>
                  {r.map((c, i) => (
                    <div key={i} className={`flex items-center whitespace-nowrap border-r border-[#e3e9f0] px-[8px] tracking-[-0.2px] ${balLeft(i) ? '' : 'justify-end'} ${balLink(i) ? 'text-[#3f76ad]' : ''}`}>{c}</div>
                  ))}
                </div>
              ))}
              <div className={`grid h-[6px] ${BAL_COLS} bg-white`}>
                {BAL_HEAD.map((h) => <div key={h} className="border-r border-[#e3e9f0]" />)}
              </div>
            </div>
            <div className="w-[9px] bg-[#dfe3e8]"><div className="h-[50px] w-[9px] rounded-[4px] bg-[#b4c1d0]" /></div>
          </div>
        </div>
      </main>

      <div className="h-[19px]" />
      <div className="h-[8px] border-b-2 border-[#8d9194] bg-[#d2d6d9]" />
      <footer className="flex flex-1 items-center justify-center whitespace-pre bg-[#d2d6d9] pt-[3px] font-['Liberation_Sans',sans-serif] text-[15px] text-[#222]">
        <span>© 2023 Planet DDS | </span><a className="text-[#1f5fae] underline">Privacy Policy</a><span> |  </span><span className="text-[14.3px]">Page Time Left (hh:mm:ss) 1:59:4</span>
      </footer>
    </div>
  );
}
